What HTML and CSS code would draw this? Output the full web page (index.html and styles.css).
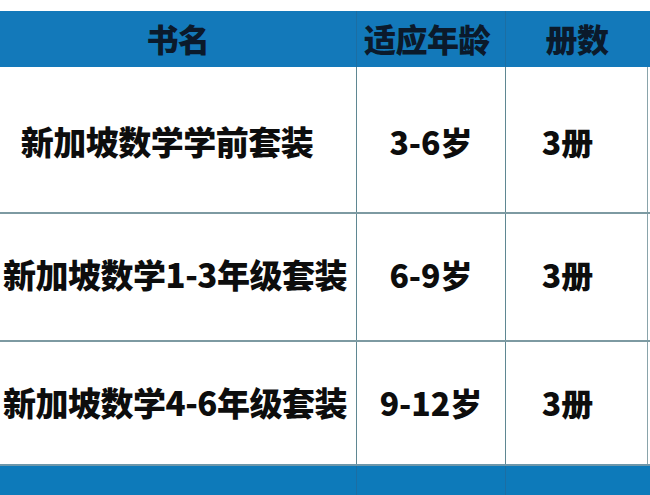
FILE: index.html
```html
<!DOCTYPE html>
<html lang="zh">
<head>
<meta charset="utf-8">
<link rel="stylesheet" href="styles.css">
</head>
<body>
<div class="sheet">
  <div class="row head">
    <div class="cell c1">书名</div>
    <div class="cell c2 age">适应年龄</div>
    <div class="cell c3">册数</div>
  </div>
  <div class="row body r1">
    <div class="cell c1 name">新加坡数学学前套装</div>
    <div class="cell c2">3-6岁</div>
    <div class="cell c3 num">3册</div>
  </div>
  <div class="row body r2">
    <div class="cell c1 name">新加坡数学1-3年级套装</div>
    <div class="cell c2">6-9岁</div>
    <div class="cell c3 num">3册</div>
  </div>
  <div class="row body r3">
    <div class="cell c1 name">新加坡数学4-6年级套装</div>
    <div class="cell c2">9-12岁</div>
    <div class="cell c3 num">3册</div>
  </div>
  <div class="row foot">
    <div class="cell c1"></div>
    <div class="cell c2"></div>
    <div class="cell c3"></div>
  </div>
</div>
</body>
</html>
```

FILE: styles.css
```css
html, body {
  margin: 0;
  padding: 0;
  background: #ffffff;
}
body {
  font-family: "Noto Sans CJK SC", "Noto Sans", sans-serif;
  width: 650px;
  height: 495px;
  overflow: hidden;
}
.sheet {
  padding-top: 11px;
  display: flex;
  flex-direction: column;
}
.row {
  display: grid;
  grid-template-columns: 356px 149px 143px 2px;
}
.cell {
  display: flex;
  align-items: center;
  justify-content: center;
  font-weight: 900;
  color: #0d0d0d;
  white-space: nowrap;
  box-sizing: border-box;
}
.head {
  height: 56px;
  background: #1379ba;
}
.head .cell {
  font-size: 32px;
  color: #0b1a2b;
  letter-spacing: -0.5px;
  padding-bottom: 2px;
}
.head .age {
  padding-right: 8px;
}
.head .c2, .head .c3, .foot .c2, .foot .c3 {
  border-left: 1px solid #1c6ea3;
}
.body .cell {
  font-size: 32px;
  background: #ffffff;
}
.body .c2, .body .c3 {
  border-left: 1px solid #5f8792;
}
.body .c3 {
  border-right: 1px solid #8aa4ab;
}
.body .name {
  padding-right: 6px;
  font-size: 33px;
  letter-spacing: -0.5px;
}
.body .num {
  padding-right: 18px;
}
.r1 { height: 145px; }
.r1 .cell { padding-top: 2px; }
.r1 .name { padding-right: 22px; }
.r2 { height: 126px; border-top: 2px solid #7d9aa2; }
.r2 .cell { padding-bottom: 6px; }
.r3 { height: 122px; border-top: 2px solid #7d9aa2; }
.r3 .cell { padding-bottom: 2px; }
.foot {
  height: 32px;
  background: #0d7aba;
  border-top: 2px solid #6e97aa;
}
```
